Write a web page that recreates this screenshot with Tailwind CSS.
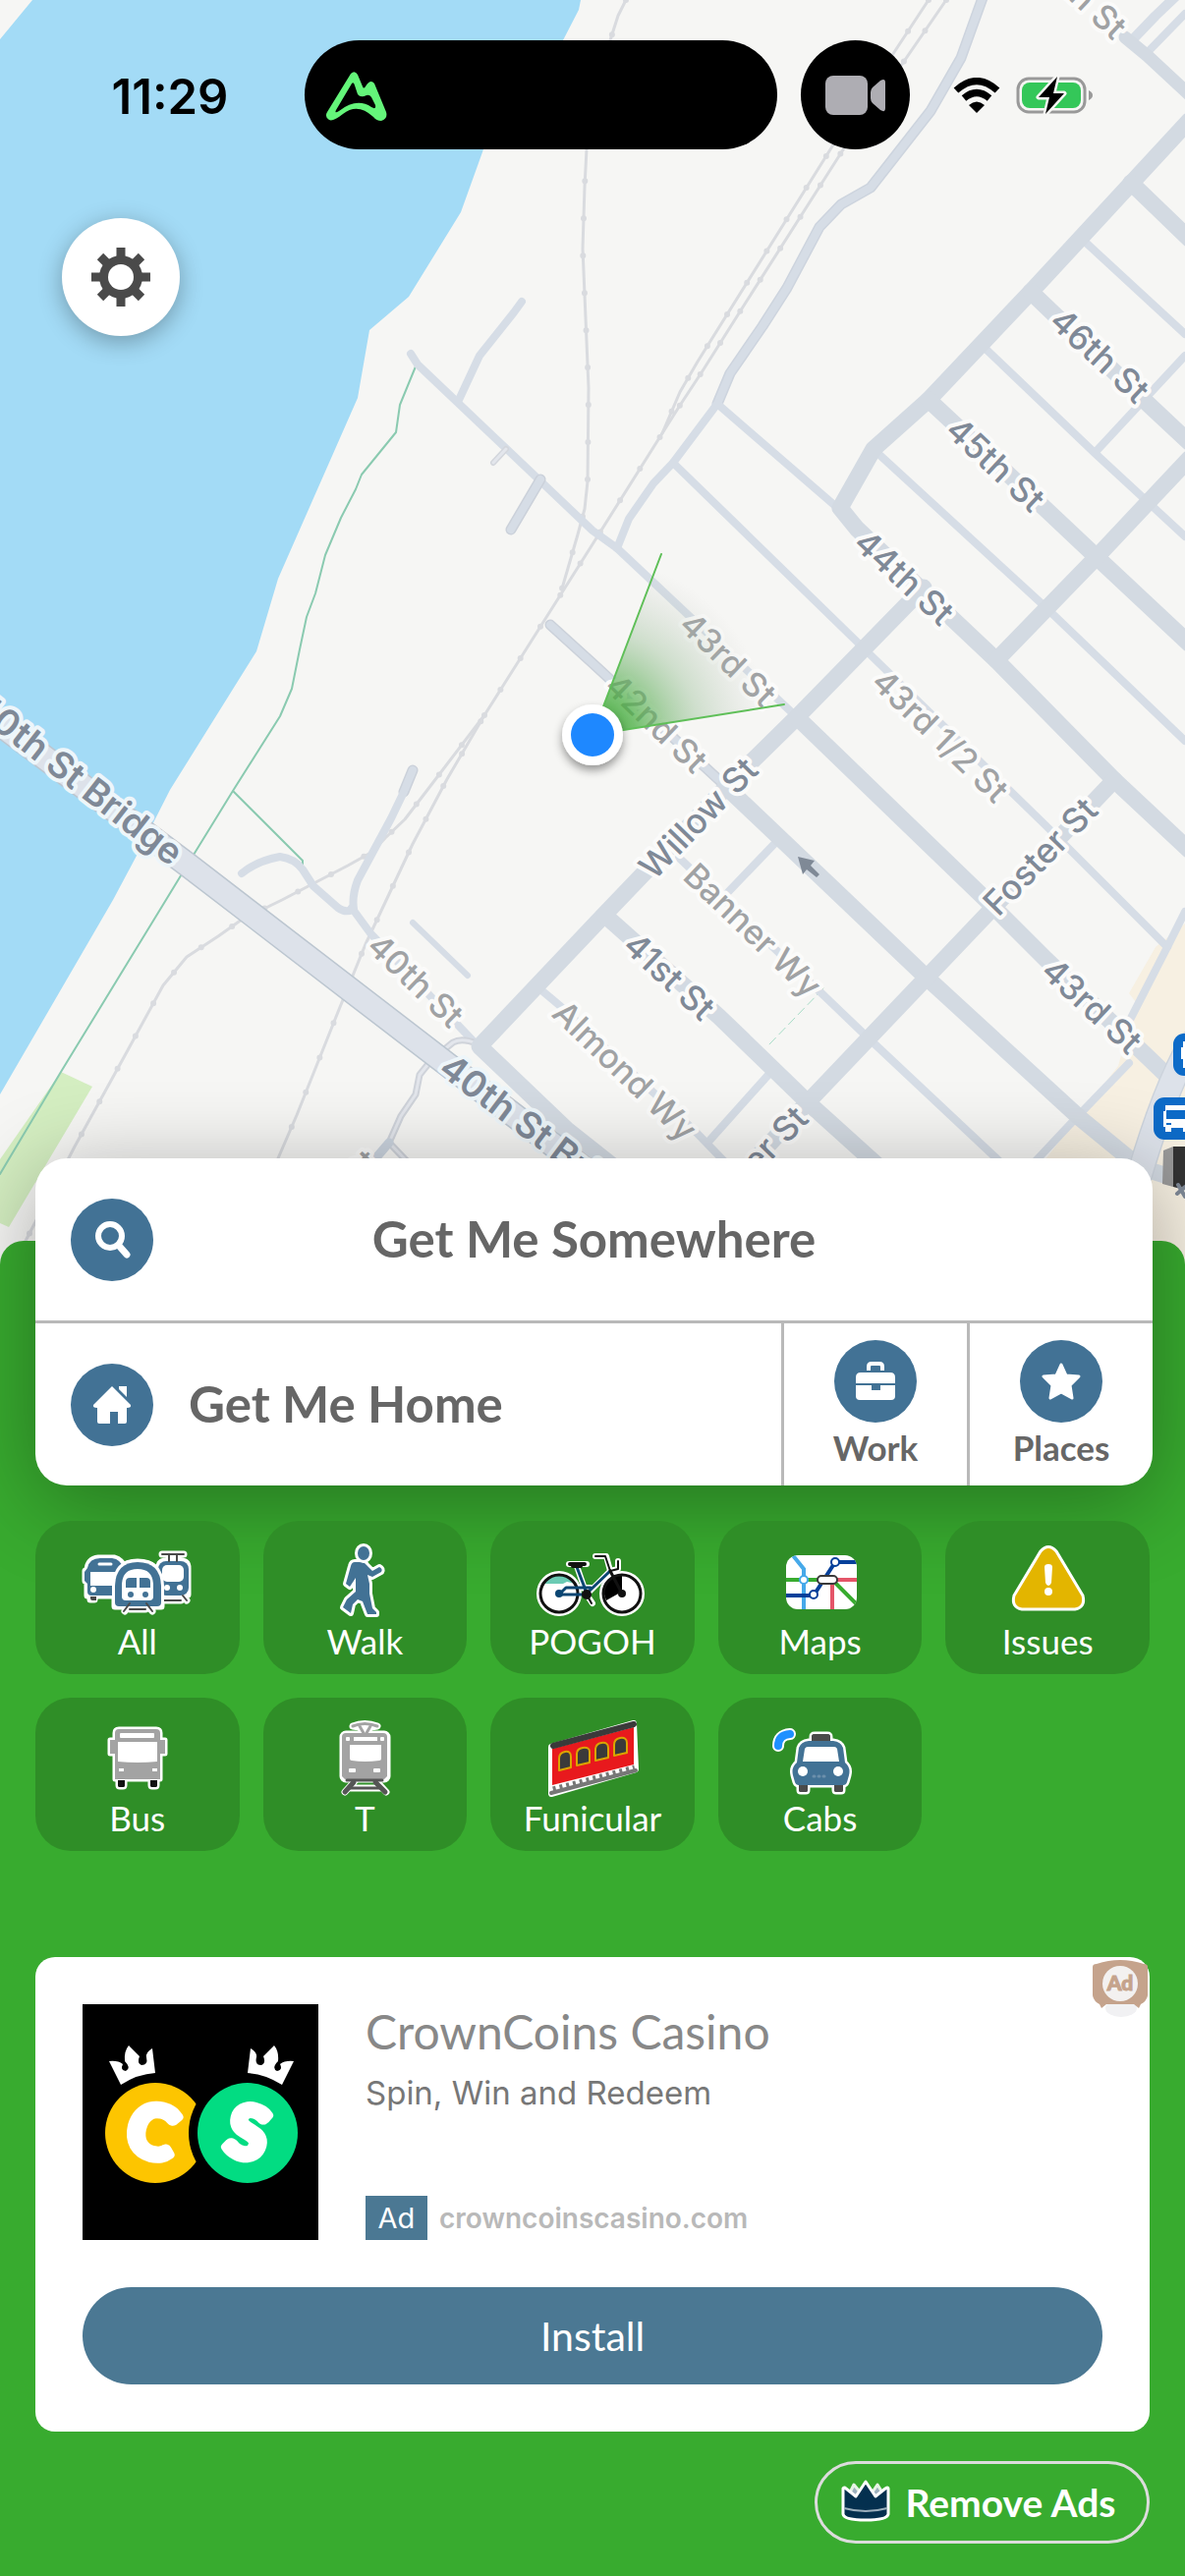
<!DOCTYPE html>
<html lang="en">
  <head>
    <meta charset="UTF-8" />
    <title>Get Me Somewhere</title>
    <meta name="viewport" content="width=device-width, initial-scale=1.0" />
    <script src="https://cdn.jsdelivr.net/npm/@tailwindcss/browser@4"></script>
  </head>
  <body class="flex min-h-screen flex-col bg-[#38ab2f] font-['Lato','Open_Sans',sans-serif]">

    <!-- Map Section -->
    <section class="relative aspect-[1206/1287] w-full overflow-hidden bg-[#f6f6f4]">
      <svg class="absolute inset-0 h-full w-full" viewBox="0 0 1206 1287" preserveAspectRatio="xMidYMin slice" fill="none" stroke-linecap="round" stroke-linejoin="round" role="img" aria-label="Map">
        <defs>
          <radialGradient id="cone" gradientUnits="userSpaceOnUse" cx="603" cy="748" r="180">
            <stop offset="0" stop-color="#38ab2f" />
            <stop offset="0.25" stop-color="#4bae44" stop-opacity="0.75" />
            <stop offset="0.6" stop-color="#8fb98c" stop-opacity="0.38" />
            <stop offset="1" stop-color="#bbb" stop-opacity="0" />
          </radialGradient>
          <filter id="dotShadow" x="-50%" y="-50%" width="200%" height="200%">
            <feDropShadow dx="0" dy="5" stdDeviation="5" flood-opacity="0.4" />
          </filter>
        </defs>

        <!-- water, park, shops -->
        <path fill="#a3dbf6" d="M33 0H591L589 10 573 41 492 152 469 216 416 302 376 336 364 405 283 589 261 663 173 804 139 871 115 916 0 1114V40Z" />
        <path fill="#d4eec1" d="M62 1091 94 1106 9 1249 0 1245V1180Z" />
        <path fill="#f7f0e2" d="M1206 940 1176 964 1149 1011 1156 1020 1138 1085 1060 1185V1287H1206Z" />

        <!-- rail -->
        <g stroke="#d9dbdf" stroke-width="3">
          <path d="M637 0 629 16 621 41 597 152 595 190 593 253 595 300 599 395 598 490 595 518 588 544 572 599" />
          <path d="M945 0 847 149 710 368 692 399 674 441" />
          <path d="M963 0 857 154 757 311 716 376 693 411 674 441 603 554 493 728 455 793 420 859 372 961 344 1030 302 1135 283 1179" />
          <path d="M493 728 480 745 435 804 412 834 392 853 379 867 354 881 287 916 246 936 222 953 190 974 166 1003 130 1069 76 1167 25 1265" />
        </g>
        <g stroke="#d9dbdf" stroke-width="6" stroke-dasharray="0 38">
          <path d="M637 0 629 16 621 41 597 152 595 190 593 253 595 300 599 395 598 490 595 518 588 544 572 599" />
          <path d="M945 0 847 149 710 368 692 399 674 441" />
          <path d="M963 0 857 154 757 311 716 376 693 411 674 441 603 554 493 728 455 793 420 859 372 961 344 1030 302 1135 283 1179" />
          <path d="M493 728 480 745 435 804 412 834 392 853 379 867 354 881 287 916 246 936 222 953 190 974 166 1003 130 1069 76 1167 25 1265" />
        </g>

        <!-- trail -->
        <g stroke="#8acab0" stroke-width="2">
          <path d="M423 373 407 412 403 440 368 483 362 498 347 527 331 565 321 604 312 628 305 661 297 701 285 729 237 805 197 870 62 1091 0 1195M237 805 308 876V882" />
          <path stroke="#a5dcc6" stroke-width="1" stroke-dasharray="9 5" d="M838 1006 782 1064" />
        </g>

        <!-- minor roads -->
        <g stroke="#d6dde6" stroke-width="8">
          <path d="M418 360 425 371 603 540 628 558 811 730" />
          <path stroke="#cdd4de" stroke-width="11" d="M1001 -5 978 59 947 113 886 191 856 208 834 231 801 293 776 332 743 380 730 411" />
          <path d="M1001 -5 978 59 947 113 886 191 856 208 834 231 801 293 776 332 743 380 730 411 685 471 665 492 640 528 628 558" />
          <path d="M531 307 523 318 488 362 467 407" />
          <path stroke="#d3d6dc" stroke-width="6" d="M515 457 502 471" />
          <path stroke="#e3e6ec" stroke-width="3" d="M515 457 502 471" />
          <path stroke="#cbd1da" stroke-width="11" d="M550 488 520 539M420 784 411 806" />
          <path d="M550 488 520 539" />
          <path d="M246 889Q262 876 285 872 300 874 308 885L319 902 344 924Q352 930 360 925 358 912 364 896L398 833 411 806 420 784" />
          <path d="M358 924 377 950 481 1059" />
          <path stroke-width="6" d="M420 939 476 993" />
          <path stroke="#cbd1da" stroke-width="11" d="M560 636 603 675 734 796" />
          <path d="M560 636 603 675 734 796" />
          <path d="M691 873 834 1009 882 1055 1014 1179 1040 1204" />
          <path d="M788 859 741 908M550 1007 569 1023 707 1151 740 1185M782 1094 722 1161" />
          <path d="M685 471 874 655 1064 840 1188 964" />
          <path d="M730 411 849 514M893 461 1063 617 1206 754M1002 354 1114 461 1206 546M1103 245 1206 340M1206 362 1114 461" />
          <path d="M1206 928 1188 964 1149 1040M1149 1082 1095 1138 1050 1186" />
          <path d="M1168 53 1206 14" />
          <path stroke-width="10" d="M1153 40 1176 16 1197 -4" />
        </g>

        <!-- path below the bridge -->
        <g stroke="#cfd3da" stroke-width="7">
          <path d="M450 1070 461 1061Q470 1056 485 1062M435 1084 427 1094 423 1114 408 1136 396 1163 415 1183" />
          <path stroke="#e3e6ec" stroke-width="3" d="M450 1070 461 1061Q470 1056 485 1062M435 1084 427 1094 423 1114 408 1136 396 1163 415 1183" />
          <path stroke="#cbd4df" stroke-width="9" d="M396 1163 378 1184" />
        </g>

        <!-- major roads -->
        <g stroke="#d3dae2" stroke-width="17">
          <path d="M1210 123 1051 295 945 407 889 457 855 517 872 538 1014 672 1134 794 1210 865" />
          <path d="M945 407 1064 518 1116 567 1210 655M1049 297 1164 407 1210 450M1151 186 1210 243" />
          <path d="M1210 467 1116 567 1014 672" />
          <path d="M940 598 811 730 750 790 614 932 488 1065 577 1150 625 1188" />
          <path d="M811 730 1014 926 1064 976 1191 1098" />
          <path d="M738 800 943 995 1099 1138 1160 1188 1210 1204" />
          <path d="M1134 794 1003 932 943 995 822 1122 765 1184M616 932 732 1035 822 1122 894 1187" />
          <path stroke-width="13" d="M1145 38 1168 57 1210 96" />
          <path stroke-width="27" stroke="#ccd3dc" d="M1212 1062Q1185 1110 1160 1195" />
          <path stroke-width="24" stroke="#dde2ea" d="M1212 1062Q1185 1110 1160 1195" />
        </g>
        <g stroke-linecap="butt">
          <path stroke="#bcc6d0" stroke-width="26" d="M-20 722 192 881 456 1084 620 1209" />
          <path stroke="#dde2ea" stroke-width="23" d="M-20 722 192 881 456 1084 620 1209" />
        </g>

        <!-- one-way arrow -->
        <path fill="#7f8996" d="M812 872 829 876 825 881 834 890 831 893 821 885 817 890Z" />

        <!-- street labels -->
        <g font-family="Inter, 'Liberation Sans', sans-serif" font-size="35" font-weight="500" fill="#7f8997" stroke="#fbfbfa" stroke-width="8" paint-order="stroke" text-anchor="middle">
          <text transform="translate(1119 362) rotate(43)" y="12">46th St</text>
          <text transform="translate(1013 473) rotate(43)" y="12">45th St</text>
          <text transform="translate(920 588) rotate(43)" y="12">44th St</text>
          <text transform="translate(1111 1024) rotate(43)" y="12">43rd St</text>
          <text transform="translate(681 994) rotate(43)" y="12">41st St</text>
          <text transform="translate(711 833) rotate(-46)" y="12">Willow St</text>
          <text transform="translate(1059 872) rotate(-46)" y="12">Foster St</text>
          <text transform="translate(816 1132) rotate(-46)" y="12" text-anchor="end">Foster St</text>
          <g font-size="37" font-weight="600" stroke="#eef6fa">
            <text transform="translate(181 873) rotate(38)" y="12" text-anchor="end">40th St Bridge</text>
            <text transform="translate(452 1082) rotate(37)" y="12" text-anchor="start">40th St Bridge</text>
          </g>
          <g font-size="34" fill="#a0a2a4">
            <text transform="translate(741 671) rotate(44)" y="12">43rd St</text>
            <text transform="translate(668 736) rotate(44)" y="12">42nd St</text>
            <text transform="translate(957 749) rotate(44)" y="12">43rd 1/2 St</text>
            <text transform="translate(766 947) rotate(44)" y="12">Banner Wy</text>
            <text transform="translate(636 1090) rotate(44)" y="12">Almond Wy</text>
            <text transform="translate(423 998) rotate(44)" y="12">40th St</text>
            <text transform="translate(1141 33) rotate(43)" y="12" text-anchor="end">47th St</text>
            <text transform="translate(380 1176) rotate(-46)" y="12" text-anchor="end">40th St</text>
          </g>
        </g>

        <!-- heading cone and location dot -->
        <path fill="url(#cone)" d="M603 748 673 564Q770 610 798 717Z" />
        <path stroke="#5fbf58" stroke-width="2" d="M603 748 673 564M603 748 798 717" />
        <circle cx="603" cy="748" r="31" fill="#fff" filter="url(#dotShadow)" />
        <circle cx="603" cy="748" r="22" fill="#1e88ff" />

        <!-- stops -->
        <rect x="1194" y="1052" width="44" height="43" rx="11" fill="#0d6bc8" />
        <path fill="#fff" d="M1206 1060H1204V1066H1202V1078H1204V1087H1206Z" />
        <rect x="1174" y="1117" width="44" height="43" rx="11" fill="#0d6bc8" />
        <path fill="#fff" d="M1186 1125H1210V1152H1204V1148H1192V1152H1186V1147H1184V1131H1186Z" />
        <path fill="#0d6bc8" d="M1187 1130H1210V1139H1187ZM1187 1143H1192V1145H1187Z" />
        <path fill="#9a9a9a" d="M1184 1171 1194 1167V1208L1183 1205Z" />
        <path fill="#333" d="M1194 1167H1206V1211L1194 1208Z" />
        <path stroke="#7f8997" stroke-width="4" d="M1198 1215 1206 1208M1199 1206 1206 1218" />
      </svg>

      <!-- Status Bar -->
      <header class="relative flex h-[152px] items-end">
        <div class="flex h-[111px] w-[310px] items-center justify-center pt-1 pl-9 font-['Inter'] text-[49px] font-semibold text-black">11:29</div>
        <div class="flex h-[111px] w-[481px] items-center rounded-full bg-black pl-5">
          <svg class="h-16 w-16" viewBox="0 0 64 64" aria-hidden="true">
            <path fill="#64f57a" fill-rule="evenodd" d="M27 10Q31 6 34 11L39 23Q40 26 42 23 47 15 51 20L63 49Q65 56 58 58 53 58 50 54 34 39 19 51 9 59 5 57 0 54 3 49ZM28 20 12 47Q10 51 15 48 33 34 48 44 53 47 52 42L48 34Q46 31 43 32 37 35 34 31L31 22Q30 18 28 20Z" />
          </svg>
        </div>
        <div class="ml-6 flex h-[111px] w-[111px] items-center justify-center rounded-full bg-black">
          <svg class="h-10 w-[62px]" viewBox="0 0 62 40" fill="#aeadb3" aria-hidden="true">
            <rect width="43" height="40" rx="8" />
            <path d="M46 17Q46 14 48 12L56 5Q61 2 61 7V33Q61 38 56 35L48 28Q46 26 46 23Z" />
          </svg>
        </div>
        <div class="ml-11 flex h-[111px] items-center gap-4">
          <svg class="h-9 w-12" viewBox="0 0 48 36" fill="none" stroke="#000" stroke-width="7" aria-hidden="true">
            <path d="M3 13Q24 -6 45 13" />
            <path d="M11 21Q24 10 37 21" />
            <path fill="#000" stroke="none" d="M16 28Q24 21 32 28L24 36Z" />
          </svg>
          <svg class="h-10 w-20" viewBox="0 0 80 40" fill="none" aria-hidden="true">
            <rect x="2" y="3" width="68" height="34" rx="11" stroke="#999" stroke-width="3" />
            <rect x="6" y="7" width="60" height="26" rx="8" fill="#34c759" />
            <path fill="#999" d="M74 15Q78 17 78 20 78 23 74 25Z" />
            <path fill="#000" stroke="#f6f6f4" stroke-width="5" paint-order="stroke" stroke-linejoin="round" d="M42 1 23 22H34L30 39 49 18H38Z" />
          </svg>
        </div>
      </header>

      <button type="button" aria-label="Settings" class="relative mt-[70px] ml-[63px] flex h-[120px] w-[120px] items-center justify-center rounded-full bg-white shadow-[0_6px_24px_rgba(0,0,0,0.3)]">
        <svg class="h-16 w-16" viewBox="-32 -32 64 64" aria-hidden="true">
          <g stroke="#4a4a4a" stroke-width="9">
            <path d="M0 -30V30M-30 0H30M-21 -21 21 21M-21 21 21 -21" />
          </g>
          <circle r="22" fill="#4a4a4a" />
          <circle r="13" fill="#fff" />
        </svg>
      </button>
    </section>

    <!-- Bottom Sheet -->
    <main class="relative -mt-6 flex flex-1 flex-col rounded-t-3xl bg-[#38ab2f] pb-8">

      <!-- Trip card -->
      <section class="-mt-[84px] mr-[33px] ml-9 overflow-hidden rounded-[32px] bg-white text-[#666] shadow-[0_16px_90px_rgba(0,0,0,0.33)]">
        <button type="button" class="relative flex h-[165px] w-full items-center justify-center text-[51px] font-bold">
          <span class="absolute left-9 flex h-[84px] w-[84px] items-center justify-center rounded-full bg-[#427295]">
            <svg class="h-10 w-10" viewBox="0 0 40 40" fill="none" stroke="#fff" stroke-linecap="round" aria-hidden="true">
              <circle cx="18" cy="16" r="12" stroke-width="6" />
              <path stroke-width="7" d="M28 27 35 35" />
            </svg>
          </span>
          Get Me Somewhere
        </button>
        <div class="flex h-[168px] border-t-[3px] border-[#b9b9b9]">
          <button type="button" class="flex flex-1 items-center gap-9 pl-9 text-[51px] font-bold">
            <span class="flex h-[84px] w-[84px] items-center justify-center rounded-full bg-[#427295]">
              <svg class="h-10 w-10" viewBox="0 0 40 40" fill="#fff" aria-hidden="true">
                <path d="M20 1 1 20Q0 23 5 23V37Q5 39 7 39H18V27H26V39H33Q35 39 35 37V23Q40 23 39 20Z" />
                <path d="M27 1H35V12L27 4Z" />
              </svg>
            </span>
            Get Me Home
          </button>
          <button type="button" class="flex w-[189px] flex-col items-center border-l-[3px] border-[#b9b9b9] pt-[17px] text-[35px] leading-[50px] font-bold">
            <span class="flex h-[84px] w-[84px] items-center justify-center rounded-full bg-[#427295]">
              <svg class="h-10 w-10" viewBox="0 0 40 40" fill="#fff" aria-hidden="true">
                <path fill="none" stroke="#fff" stroke-width="4" d="M13 9V5Q13 2 16 2H24Q27 2 27 5V9" />
                <path d="M0 22V16Q0 11 5 11H35Q40 11 40 16V22ZM0 24H16V29H25V24H40V35Q40 39 36 39H4Q0 39 0 35Z" />
              </svg>
            </span>
            Work
          </button>
          <button type="button" class="flex w-[189px] flex-col items-center border-l-[3px] border-[#b9b9b9] pt-[17px] text-[35px] leading-[50px] font-bold">
            <span class="flex h-[84px] w-[84px] items-center justify-center rounded-full bg-[#427295]">
              <svg class="h-10 w-10" viewBox="0 0 40 40" fill="#fff" stroke="#fff" stroke-width="3" stroke-linejoin="round" aria-hidden="true">
                <path d="M20 3 25 14 38 15 29 24 31 37 20 31 9 37 11 24 2 15 15 14Z" />
              </svg>
            </span>
            Places
          </button>
        </div>
      </section>

      <!-- Transport modes -->
      <nav class="relative mx-9 mt-9 grid grid-cols-5 gap-6 text-[35px] leading-10 text-white">
        <button type="button" class="flex h-[156px] flex-col items-center rounded-[36px] bg-[#2f8e27] pt-[18px]">
          <svg class="h-[84px] w-[120px] shrink-0" viewBox="0 0 120 84" fill="none" stroke-linejoin="round" stroke-linecap="round" aria-hidden="true">
            <g fill="#fff" stroke="#fff" stroke-width="7">
              <path d="M9 58V32Q10 21 20 20H36Q44 22 48 32V58ZM7 33V43M12 58H16V62H12ZM82 57V30Q82 23 89 23H104Q111 23 111 30V57ZM85 16H107M92 16V23M100 16V23M87 63H104M106 58 110 63" />
              <path d="M37 69V48Q38 24 60 24 83 24 84 48V69ZM47 74 52 67M75 74 69 67M52 72H68" />
            </g>
            <path fill="#427295" d="M6 34 9 30Q11 20 22 20H34Q43 21 46 31V58H13Q9 58 9 54V46L6 43Z" />
            <path fill="#fff" d="M12 34H46V48H12Z" />
            <path stroke="#fff" stroke-width="3" d="M21 26H33" />
            <circle cx="15" cy="52" r="3" fill="#fff" />
            <path fill="#4a4a4a" d="M12 59H18V63H14Q12 63 12 61Z" />
            <rect x="81" y="23" width="31" height="35" rx="8" fill="#427295" />
            <rect x="85" y="27" width="22" height="17" rx="5" fill="#fff" />
            <circle cx="90" cy="50" r="3" fill="#fff" />
            <circle cx="103" cy="50" r="3" fill="#fff" />
            <path stroke="#4a4a4a" stroke-width="2" d="M85 16H107M92 16V23M100 16V23M87 63H104M106 58 110 63" />
            <path fill="#427295" stroke="#fff" stroke-width="6" paint-order="stroke" d="M37 65V48Q38 24 60 24 83 24 84 48V65Q84 69 80 69H41Q37 69 37 65Z" />
            <path fill="#fff" d="M44 59V46Q45 31 60 31 75 31 76 46V59Q76 63 72 63H48Q44 63 44 59Z" />
            <path fill="#427295" d="M48 50V44Q48 40 52 40H59V50ZM62 40H69Q73 40 73 44V50H62Z" />
            <circle cx="53" cy="57" r="3" fill="#427295" />
            <circle cx="68" cy="57" r="3" fill="#427295" />
            <path stroke="#4a4a4a" stroke-width="2" d="M46 74 52 66M75 74 69 66M52 72H68" />
          </svg>
          All
        </button>
        <button type="button" class="flex h-[156px] flex-col items-center rounded-[36px] bg-[#2f8e27] pt-[18px]">
          <svg class="h-[84px] w-[120px] shrink-0" viewBox="0 0 120 84" aria-hidden="true">
            <g fill="#427295" stroke="#fff" stroke-width="6" paint-order="stroke" stroke-linejoin="round">
              <path d="M50 24H57Q60 24 62 27L68 33 75 29Q79 31 77 34L68 39 63 37 65 46V56L68 71 72 75V77H63L58 64 53 62 48 67 46 76 38 70 42 62 51 54V40L45 49 41 46 46 28Q47 24 50 24Z" />
              <ellipse cx="59" cy="15" rx="6" ry="7" />
            </g>
          </svg>
          Walk
        </button>
        <button type="button" class="flex h-[156px] flex-col items-center rounded-[36px] bg-[#2f8e27] pt-[18px]">
          <svg class="h-[84px] w-[120px] shrink-0" viewBox="0 0 120 84" fill="none" stroke-linejoin="round" stroke-linecap="round" aria-hidden="true">
            <g stroke="#fff" stroke-width="6">
              <circle cx="26" cy="56" r="20" fill="#fff" />
              <circle cx="90" cy="56" r="20" fill="#fff" />
              <path d="M36 26H54M44 28 54 57 78 33M26 56 33 50H58M63 18H74L78 33 86 31V23M54 57 60 66" />
            </g>
            <path fill="#6bcbb4" d="M9 46Q15 36 26 36 37 37 43 46L34 44 30 46Z" />
            <path fill="#000" d="M90 37Q74 39 71 54L74 63 90 54Z" />
            <circle cx="26" cy="56" r="19" stroke="#111" stroke-width="3" />
            <circle cx="90" cy="56" r="19" stroke="#111" stroke-width="3" />
            <path stroke="#0b4673" stroke-width="3" d="M44 29 52 50 54 57H26L33 50H58M54 56 78 33" />
            <path stroke="#111" stroke-width="3" d="M78 33 90 56" />
            <path stroke="#111" stroke-width="2" d="M63 18H73L75 24 78 33 86 31V23M54 57 59 66" />
            <path stroke="#111" stroke-width="4" d="M37 26H52M40 28H48" />
            <circle cx="26" cy="56" r="4" fill="#0b4673" />
            <circle cx="54" cy="57" r="5" fill="#111" />
            <circle cx="90" cy="56" r="4" fill="#111" />
          </svg>
          POGOH
        </button>
        <button type="button" class="flex h-[156px] flex-col items-center rounded-[36px] bg-[#2f8e27] pt-[18px]">
          <svg class="h-[84px] w-[120px] shrink-0" viewBox="0 0 120 84" fill="none" stroke-width="4" aria-hidden="true">
            <clipPath id="mapTile"><rect x="25" y="17" width="72" height="55" rx="12" /></clipPath>
            <g clip-path="url(#mapTile)">
              <rect x="25" y="17" width="72" height="55" fill="#fff" />
              <path stroke="#38ab2f" d="M25 42H64M72 42 97 67" />
              <path stroke="#e45568" d="M68 42H97M72 42V72" />
              <path stroke="#46a9e9" d="M31 16 43 31V72" />
              <path stroke="#04409a" d="M25 58H53L75 24H97" />
              <g fill="#fff" stroke-width="2">
                <circle cx="43" cy="42" r="4" stroke="#46a9e9" />
                <circle cx="53" cy="57" r="4" stroke="#04409a" />
                <circle cx="75" cy="24" r="4" stroke="#04409a" />
                <rect x="57" y="38" width="20" height="8" rx="4" stroke="#3a3a3a" />
              </g>
            </g>
          </svg>
          Maps
        </button>
        <button type="button" class="flex h-[156px] flex-col items-center rounded-[36px] bg-[#2f8e27] pt-[18px]">
          <svg class="h-[84px] w-[120px] shrink-0" viewBox="0 0 120 84" stroke-linecap="round" aria-hidden="true">
            <path fill="#e3b500" stroke="#fff" stroke-width="3" d="M53 13Q61 4 69 13L96 58Q99 70 88 72H34Q23 70 26 58Z" />
            <path fill="#fff" d="M57 29Q57 26 61 26 65 26 65 29L64 45Q63 48 61 48 59 48 58 45Z" />
            <circle cx="61" cy="54" r="4" fill="#fff" />
          </svg>
          Issues
        </button>
        <button type="button" class="flex h-[156px] flex-col items-center rounded-[36px] bg-[#2f8e27] pt-[18px]">
          <svg class="h-[84px] w-[120px] shrink-0" viewBox="0 0 120 84" aria-hidden="true">
            <g stroke="#fff" stroke-width="5" paint-order="stroke" stroke-linejoin="round">
              <path fill="#111" d="M40 64H47V71Q47 73 45 73H42Q40 73 40 71ZM73 64H80V71Q80 73 78 73H75Q73 73 73 71Z" />
              <path fill="#a3a3a3" d="M37 18Q37 14 41 14H79Q83 14 83 18V25H88V39H83V65H37V39H32V25H37Z" />
            </g>
            <rect x="42" y="18" width="35" height="5" rx="1" fill="#fff" />
            <path fill="#fff" d="M40 27H80V47Q60 49 40 47Z" />
            <rect x="41" y="54" width="5" height="3" fill="#fff" />
            <rect x="75" y="54" width="5" height="3" fill="#fff" />
            <path fill="#111" d="M40 66H47V71Q47 73 45 73H42Q40 73 40 71ZM73 66H80V71Q80 73 78 73H75Q73 73 73 71Z" />
          </svg>
          Bus
        </button>
        <button type="button" class="flex h-[156px] flex-col items-center rounded-[36px] bg-[#2f8e27] pt-[18px]">
          <svg class="h-[84px] w-[120px] shrink-0" viewBox="0 0 120 84" fill="none" stroke-linecap="round" stroke-linejoin="round" aria-hidden="true">
            <g stroke="#fff" stroke-width="7" fill="#fff">
              <rect x="38" y="19" width="45" height="46" rx="3" />
              <path d="M48 11Q60 6 73 11L66 12 63 18H58L55 12ZM50 67 40 78M72 67 82 78M44 74H78" />
            </g>
            <path stroke="#a3a3a3" stroke-width="3" d="M48 11Q60 6 73 11M55 11 59 18M66 11 62 18" />
            <path fill="#a3a3a3" d="M37 22Q37 18 41 18H79Q83 18 83 22V62L80 65H40L37 62Z" />
            <rect x="49" y="22" width="24" height="4" fill="#fff" />
            <rect x="41" y="22" width="4" height="4" rx="1" fill="#fff" />
            <rect x="76" y="22" width="4" height="4" rx="1" fill="#fff" />
            <path fill="#fff" d="M45 30H77V44Q77 46 75 46 60 48 47 46 45 46 45 44Z" />
            <rect x="44" y="54" width="7" height="4" rx="1" fill="#fff" />
            <rect x="69" y="54" width="7" height="4" rx="1" fill="#fff" />
            <path stroke="#555" stroke-width="3" d="M42 66H78M45 74H75" />
            <path stroke="#555" stroke-width="5" d="M49 68 40 78M71 68 81 78" />
          </svg>
          T
        </button>
        <button type="button" class="flex h-[156px] flex-col items-center rounded-[36px] bg-[#2f8e27] pt-[18px]">
          <svg class="h-[84px] w-[120px] shrink-0" viewBox="0 0 120 84" stroke-linejoin="round" stroke-linecap="round" aria-hidden="true">
            <path fill="#fff" stroke="#fff" stroke-width="6" d="M18 32 102 8 104 55 18 80Z" />
            <path fill="#e8191d" d="M19 34 102 12V50L19 71Z" />
            <path stroke="#3a3a3a" stroke-width="6" d="M20 31 102 9" />
            <g fill="#3a3a3a" stroke="#dba400" stroke-width="2">
              <path d="M26 56V44Q26 38 32 37 38 36 38 42V53Z" />
              <path d="M44 51V39Q44 34 50 33 57 32 57 37V48Z" />
              <path d="M63 46V35Q63 29 69 28 76 27 76 33V43Z" />
              <path d="M82 41V30Q82 24 88 23 95 22 95 28V38Z" />
            </g>
            <path stroke="#777" stroke-width="4" d="M18 79 104 56" />
            <path stroke="#777" stroke-width="7" stroke-linecap="butt" stroke-dasharray="3 4" d="M20 76 103 54" />
          </svg>
          Funicular
        </button>
        <button type="button" class="flex h-[156px] flex-col items-center rounded-[36px] bg-[#2f8e27] pt-[18px]">
          <svg class="h-[84px] w-[120px] shrink-0" viewBox="0 0 120 84" fill="none" stroke-linecap="round" stroke-linejoin="round" aria-hidden="true">
            <path stroke="#fff" stroke-width="12" d="M17 31Q17 20 29 19" />
            <path stroke="#1e90ff" stroke-width="8" d="M17 31Q17 20 29 19" />
            <g stroke="#fff" stroke-width="5" paint-order="stroke">
              <path fill="#4a4a4a" d="M51 28V22Q51 19 54 19H67Q70 19 70 22V28ZM38 68H47V76Q47 78 45 78H40Q38 78 38 76ZM74 68H83V76Q83 78 81 78H76Q74 78 74 76Z" />
              <path fill="#427295" d="M38 33Q40 27 48 26H73Q81 27 83 33L85 48Q91 53 89 61L87 68Q86 71 83 71H38Q35 71 34 68L32 61Q30 53 36 48Z" />
            </g>
            <path fill="#4a4a4a" d="M51 26V22Q51 19 54 19H67Q70 19 70 22V26ZM38 71H47V76Q47 78 45 78H40Q38 78 38 76ZM74 71H83V76Q83 78 81 78H76Q74 78 74 76Z" />
            <path fill="#fff" d="M44 34Q45 32 47 32H74Q76 32 77 34L79 47H42Z" />
            <circle cx="42" cy="57" r="5" fill="#fff" />
            <circle cx="78" cy="57" r="5" fill="#fff" />
            <path stroke="#6b8fab" stroke-width="3" stroke-dasharray="1 4" d="M53 62H68" />
          </svg>
          Cabs
        </button>
      </nav>

      <!-- Ad card -->
      <section class="relative mx-9 mt-[108px] rounded-[20px] bg-white p-12">
        <svg class="absolute top-[2px] right-0 h-[60px] w-[60px]" viewBox="0 0 60 60" role="img" aria-label="Ad">
          <ellipse cx="31" cy="50" rx="16" ry="9" fill="#f1f1f3" />
          <path fill="#c5a38c" d="M2 8Q2 5 6 5 30 -3 54 5 58 5 58 8V37Q57 43 51 46L49 50 44 46H16L11 50 9 46Q3 43 2 37Z" />
          <circle cx="30" cy="25" r="18" fill="#f3f1f0" />
          <text x="30" y="32" font-family="Lato, sans-serif" font-size="21" font-weight="900" fill="#c5a38c" stroke="#c5a38c" text-anchor="middle">Ad</text>
        </svg>
        <div class="flex gap-12">
          <svg class="h-60 w-60 shrink-0" viewBox="0 0 240 240" role="img" aria-label="CrownCoins Casino">
            <rect width="240" height="240" fill="#000" />
            <circle cx="74" cy="131" r="51" fill="#fdc500" />
            <circle cx="168" cy="131" r="60" fill="#000" />
            <circle cx="168" cy="131" r="51" fill="#02dc82" />
            <g font-family="Lato, sans-serif" font-size="74" font-weight="900" fill="#fff" stroke="#fff" stroke-width="8" stroke-linejoin="round" text-anchor="middle">
              <text transform="translate(71 130) rotate(14)" y="26">C</text>
              <text transform="translate(168 131) rotate(14)" y="26">S</text>
            </g>
            <path id="coinCrown" fill="#fff" d="M27 58 39 82Q56 71 74 70L71 45Q64 49 65 54 67 62 60 62 55 60 58 53L47 42Q42 48 43 58 50 65 44 68 38 67 41 61 36 57 27 58Z" />
            <use href="#coinCrown" transform="translate(242 0) scale(-1 1)" />
          </svg>
          <div class="flex flex-col">
            <h2 class="text-5xl leading-14 text-[#888]">CrownCoins Casino</h2>
            <p class="mt-2 font-['Inter'] text-[33px] leading-13 text-[#777]">Spin, Win and Redeem</p>
            <div class="mt-auto flex items-center gap-3">
              <span class="flex h-[45px] w-[63px] items-center justify-center bg-[#4b7893] font-['Inter'] text-[29px] text-white">Ad</span>
              <a href="#" class="font-['Inter'] text-[28px] font-semibold text-[#b9b9b9]">crowncoinscasino.com</a>
            </div>
          </div>
        </div>
        <button type="button" class="mt-12 block h-[99px] w-full rounded-full bg-[#4b7893] text-[41px] text-white">Install</button>
      </section>

      <button type="button" class="mt-[30px] mr-9 flex h-[84px] w-[341px] items-center justify-center gap-4 self-end rounded-full border-[3px] border-[#dcdcdc] pr-2 text-[39px] font-bold text-white">
        <svg class="h-12 w-[50px]" viewBox="0 0 50 48" stroke-linejoin="round" aria-hidden="true">
          <path fill="#9cb0bd" stroke="#e6f3e5" stroke-width="3" d="M9 14 13 6 18 12 25 20 33 12 37 6 42 14V24H9Z" />
          <path fill="#04304f" stroke="#fff" stroke-width="3" d="M2 10Q3 8 5 10L15 18 25 3 35 18 45 10Q48 8 48 10V36Q47 42 25 42 3 42 2 36Z" />
          <path fill="none" stroke="#9cb0bd" stroke-width="2" d="M3 30Q25 36 47 30" />
        </svg>
        Remove Ads
      </button>
    </main>
  </body>
</html>
